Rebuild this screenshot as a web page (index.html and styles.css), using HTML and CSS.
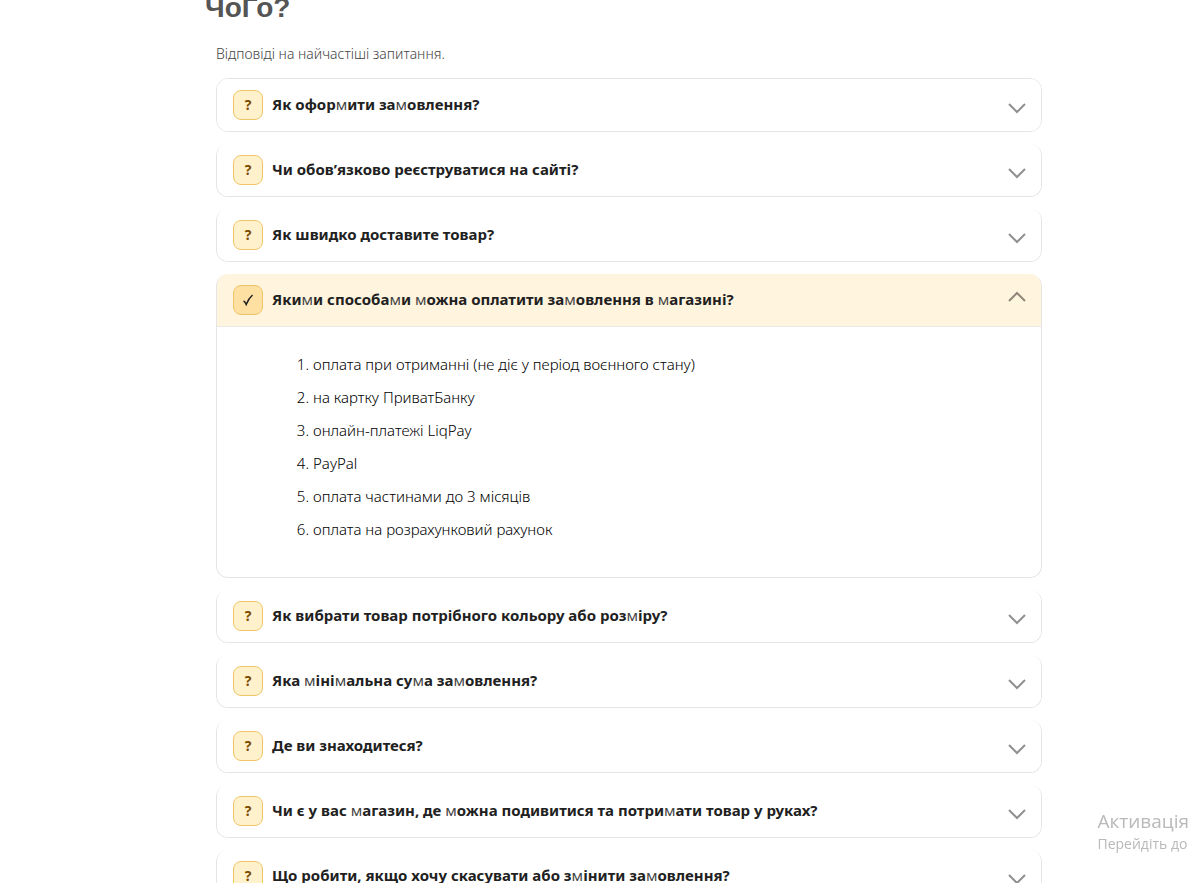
FILE: index.html
```html
<!DOCTYPE html>
<html lang="uk">
<head>
<meta charset="utf-8">
<meta name="viewport" content="width=device-width, initial-scale=1">
<title>Запитання та відповіді</title>
<link rel="stylesheet" href="styles.css">
</head>
<body>
<main class="page">
  <h1 class="title">ЧоГо?</h1>
  <section class="faq">
    <p class="intro">Відповіді на найчастіші запитання.</p>
    <div class="list">
      <article class="item">
        <button class="question" type="button" aria-expanded="false">
          <span class="badge">?</span>
          <span class="label">Як офор<i>м</i>ити за<i>м</i>овлення?</span>
          <svg class="arrow" viewBox="0 0 18 11" aria-hidden="true"><path d="M1 1l8 8 8-8"/></svg>
        </button>
      </article>
      <article class="item">
        <button class="question" type="button" aria-expanded="false">
          <span class="badge">?</span>
          <span class="label">Чи обов’язково реєструватися на сайті?</span>
          <svg class="arrow" viewBox="0 0 18 11" aria-hidden="true"><path d="M1 1l8 8 8-8"/></svg>
        </button>
      </article>
      <article class="item">
        <button class="question" type="button" aria-expanded="false">
          <span class="badge">?</span>
          <span class="label">Як швидко доставите товар?</span>
          <svg class="arrow" viewBox="0 0 18 11" aria-hidden="true"><path d="M1 1l8 8 8-8"/></svg>
        </button>
      </article>
      <article class="item">
        <button class="question" type="button" aria-expanded="true" aria-controls="payment">
          <span class="badge"><svg class="check" viewBox="0 0 12 14" aria-hidden="true"><path d="M1.500 8Q3 8.500 4.200 11.500Q6.500 5.500 10.500 2"/></svg></span>
          <span class="label">Яки<i>м</i>и способа<i>м</i>и <i>м</i>ожна оплатити за<i>м</i>овлення в <i>м</i>агазині?</span>
          <svg class="arrow" viewBox="0 0 18 11" aria-hidden="true"><path d="M1 10l8-8 8 8"/></svg>
        </button>
        <div class="answer" id="payment">
          <ol class="methods">
            <li>оплата при отриманні (не діє у період воєнного стану)</li>
            <li>на картку ПриватБанку</li>
            <li>онлайн-платежі LiqPay</li>
            <li>PayPal</li>
            <li>оплата частинами до 3 місяців</li>
            <li>оплата на розрахунковий рахунок</li>
          </ol>
        </div>
      </article>
      <article class="item">
        <button class="question" type="button" aria-expanded="false">
          <span class="badge">?</span>
          <span class="label">Як вибрати товар потрібного кольору або роз<i>м</i>іру?</span>
          <svg class="arrow" viewBox="0 0 18 11" aria-hidden="true"><path d="M1 1l8 8 8-8"/></svg>
        </button>
      </article>
      <article class="item">
        <button class="question" type="button" aria-expanded="false">
          <span class="badge">?</span>
          <span class="label">Яка <i>м</i>іні<i>м</i>альна су<i>м</i>а за<i>м</i>овлення?</span>
          <svg class="arrow" viewBox="0 0 18 11" aria-hidden="true"><path d="M1 1l8 8 8-8"/></svg>
        </button>
      </article>
      <article class="item">
        <button class="question" type="button" aria-expanded="false">
          <span class="badge">?</span>
          <span class="label">Де ви знаходитеся?</span>
          <svg class="arrow" viewBox="0 0 18 11" aria-hidden="true"><path d="M1 1l8 8 8-8"/></svg>
        </button>
      </article>
      <article class="item">
        <button class="question" type="button" aria-expanded="false">
          <span class="badge">?</span>
          <span class="label">Чи є у вас <i>м</i>агазин, де <i>м</i>ожна подивитися та потри<i>м</i>ати товар у руках?</span>
          <svg class="arrow" viewBox="0 0 18 11" aria-hidden="true"><path d="M1 1l8 8 8-8"/></svg>
        </button>
      </article>
      <article class="item">
        <button class="question" type="button" aria-expanded="false">
          <span class="badge">?</span>
          <span class="label">Що робити, якщо хочу скасувати або з<i>м</i>інити за<i>м</i>овлення?</span>
          <svg class="arrow" viewBox="0 0 18 11" aria-hidden="true"><path d="M1 1l8 8 8-8"/></svg>
        </button>
      </article>
    </div>
  </section>
</main>
<aside class="watermark">
  <div class="watermark-title">Активація</div>
  <div class="watermark-text">Перейдіть до</div>
</aside>
</body>
</html>
```
FILE: styles.css
```css
* { box-sizing: border-box; }

html { overflow: hidden; }

body {
  margin: 0;
  background: #fff;
  color: #212121;
  font-family: "Noto Sans", "Open Sans", sans-serif;
}

.page { padding: 0 149px 0 205px; }

.title {
  margin: -11px 0 0;
  color: #555;
  font-family: "Liberation Sans", Arial, sans-serif;
  font-size: 28px;
  line-height: 38px;
}

.faq { padding-left: 11px; }

.intro {
  margin: 16px 0 13px;
  color: #444;
  font-size: 14px;
  font-weight: 300;
  line-height: 22px;
}

.list {
  display: flex;
  flex-direction: column;
  gap: 12px;
}

.item {
  overflow: hidden;
  border: 1px solid #e5e5e5;
  border-top-width: 0;
  border-radius: 12px;
}

.item:first-child { border-top-width: 1px; }

.question {
  display: flex;
  align-items: center;
  gap: 9px;
  width: 100%;
  padding: 11px 15px 11px 16px;
  border: 0;
  background: #fff;
  color: #212121;
  font: bold 15px/30px "Noto Sans", "Open Sans", sans-serif;
  text-align: left;
  cursor: pointer;
}

.question[aria-expanded="true"] {
  border-bottom: 1px solid #e8e8e8;
  background: #fff5df;
}

.badge {
  display: flex;
  flex: none;
  align-items: center;
  justify-content: center;
  width: 30px;
  height: 30px;
  border: 1px solid #f0c568;
  border-radius: 8px;
  background: #fff1cc;
  color: #7a4b00;
  font-size: 14px;
}

.question[aria-expanded="true"] .badge { background: #ffe0a3; }

.label {
  flex: 1;
  padding-bottom: 2px;
  line-height: 28px;
}

.label i {
  color: #444;
  font-style: normal;
  font-weight: 400;
}

.arrow {
  flex: none;
  width: 18px;
  height: 11px;
  margin-top: 6px;
  fill: none;
  stroke: #909090;
  stroke-width: 2;
}

.question[aria-expanded="true"] .arrow {
  margin: 0 0 8px;
  stroke: #8f877a;
}

.check {
  width: 12px;
  height: 14px;
  fill: none;
  stroke: #212121;
  stroke-width: 1.5;
}

.answer { padding: 21px 16px 31px; }

.methods {
  margin: 0;
  padding-left: 80px;
  color: #000;
  font-size: 15px;
  font-weight: 300;
  line-height: 33px;
}

.watermark {
  position: fixed;
  right: 2px;
  bottom: 28px;
  color: #b9b9b9;
  font-family: "Open Sans", "Noto Sans", sans-serif;
  white-space: nowrap;
}

.watermark-title { font-size: 19px; line-height: 24px; }

.watermark-text { font-size: 14px; line-height: 22px; }
```
